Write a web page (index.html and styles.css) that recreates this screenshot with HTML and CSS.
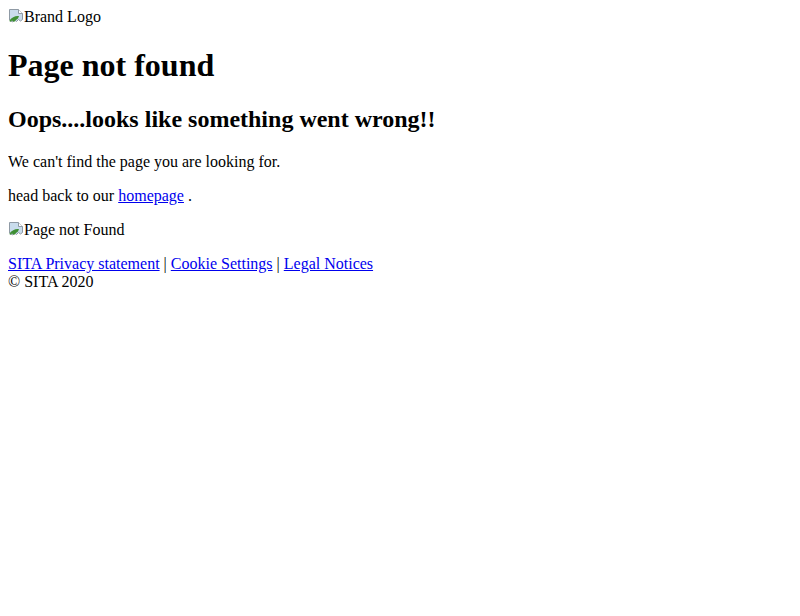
FILE: index.html
```html
<!DOCTYPE html>
<html lang="en">
<head>
    <meta charset="UTF-8">
    <meta name="viewport" content="width=device-width, initial-scale=1.0">
    <title>Page not found</title>
    <link rel="stylesheet" href="styles.css">
</head>
<body>
    <div class="brand">
        <span class="broken-img">
            <svg class="broken-icon" width="16" height="16" viewBox="0 0 16 16" aria-hidden="true">
                <path d="M1.5 1.5h9l4 4v6l-2 1.5-2-1.5-2 2-2-1.5-2 2-3-2z" fill="#c9dcec" stroke="#8f9aa5"/>
                <path d="M1.5 12.5c2.5-3.5 6-5 9.5-4.5l-1 2.5-2 1.5-2 2-2-1.5-2 1.5z" fill="#3f8f34"/>
                <path d="M10.5 1.5v4h4" fill="#fff" stroke="#8f9aa5"/>
            </svg>Brand Logo</span>
    </div>

    <h1>Page not found</h1>
    <h2>Oops....looks like something went wrong!!</h2>
    <p>We can't find the page you are looking for.</p>
    <p>head back to our <a href="#home">homepage</a> .</p>
    <p>
        <span class="broken-img">
            <svg class="broken-icon" width="16" height="16" viewBox="0 0 16 16" aria-hidden="true">
                <path d="M1.5 1.5h9l4 4v6l-2 1.5-2-1.5-2 2-2-1.5-2 2-3-2z" fill="#c9dcec" stroke="#8f9aa5"/>
                <path d="M1.5 12.5c2.5-3.5 6-5 9.5-4.5l-1 2.5-2 1.5-2 2-2-1.5-2 1.5z" fill="#3f8f34"/>
                <path d="M10.5 1.5v4h4" fill="#fff" stroke="#8f9aa5"/>
            </svg>Page not Found</span>
    </p>

    <footer>
        <div class="legal">
            <a href="#privacy">SITA Privacy statement</a> | <a href="#cookies">Cookie Settings</a> | <a href="#legal">Legal Notices</a>
        </div>
        <div>© SITA 2020</div>
    </footer>
</body>
</html>
```

FILE: styles.css
```css
body {
    margin: 8px;
    font-family: "Liberation Serif", "Times New Roman", serif;
    font-size: 16px;
    color: #000;
    background: #fff;
}

a {
    color: #0000ee;
}

.broken-img {
    display: inline-block;
}

.broken-icon {
    vertical-align: -2px;
}
```
